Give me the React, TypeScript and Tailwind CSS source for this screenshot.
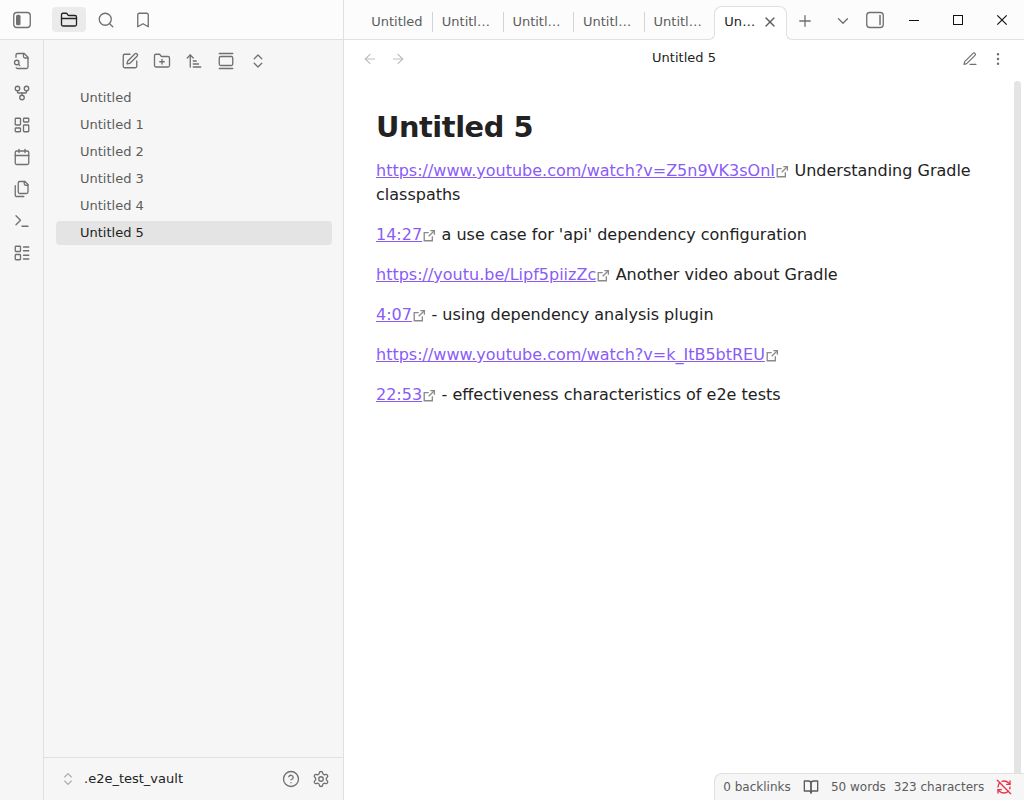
import type { ReactNode } from 'react';
import {
  ArrowLeft, ArrowRight, ArrowUpNarrowWide, Bookmark, Calendar, ChevronDown, ChevronsUpDown,
  CircleHelp, EllipsisVertical, FolderClosed, FolderPlus, GalleryVertical, GitFork,
  LayoutDashboard, LayoutList, Plus, RefreshCwOff, Search, Settings, SquarePen, Terminal, X,
} from 'lucide-react';

const notes = ['Untitled', 'Untitled 1', 'Untitled 2', 'Untitled 3', 'Untitled 4', 'Untitled 5'];

function SidebarToggle({ side }: { side: 'left' | 'right' }) {
  return (
    <svg width="18" height="18" viewBox="0 0 24 24" fill="none" stroke="currentColor" strokeWidth="1.75" className="shrink-0">
      <rect x="1" y="2" width="22" height="20" rx="4" />
      {side === 'left' ? (
        <rect x="4" y="5" width="6" height="14" rx="2" fill="currentColor" stroke="none" />
      ) : (
        <rect x="17.7" y="5" width="2" height="14" rx="1" fill="currentColor" stroke="none" />
      )}
    </svg>
  );
}

function LineIcon({ size = 18, width = 1.75, className, children }: { size?: number; width?: number; className?: string; children: ReactNode }) {
  return (
    <svg width={size} height={size} viewBox="0 0 24 24" fill="none" stroke="currentColor" strokeWidth={width} strokeLinecap="round" strokeLinejoin="round" className={className}>
      {children}
    </svg>
  );
}

function ExternalLink({ children }: { children: ReactNode }) {
  return (
    <a className="text-[#8a5cf5] underline">
      {children}
      <svg width="13" height="13" viewBox="0 0 32 32" fill="none" stroke="#8a8a8a" strokeWidth="3.3" className="ml-px mr-[0.4px] inline-block align-[-2px]">
        <path d="M14 9H3v20h20V18M18 4h10v10M28 4L14 18" />
      </svg>
    </a>
  );
}

const icon = { size: 18, strokeWidth: 1.75 };

export default function App() {
  return (
    <div className="flex h-[800px] w-[1024px] flex-col overflow-hidden bg-white text-[13px] text-[#222222] [font-family:'DejaVu_Sans',sans-serif]">
      <header className="flex h-10 shrink-0 border-b border-[#e0e0e0] bg-[#fcfcfc] text-[#707070]">
        <div className="flex w-[344px] shrink-0 items-center border-r border-[#e0e0e0] pl-[13px]">
          <SidebarToggle side="left" />
          <div className="ml-[21px] flex h-[25px] w-[34px] items-center justify-center rounded bg-[#ebebeb] text-[#222222]"><FolderClosed {...icon} /></div>
          <Search {...icon} className="ml-[11px]" />
          <Bookmark {...icon} className="ml-[19px]" />
        </div>
        <div className="flex min-w-0 flex-1 pl-[17px]">
          {notes.slice(0, 5).map((n, i) => (
            <div key={n} className="relative flex w-[70.6px] shrink-0 items-center pt-[4px] text-[#5c5c5c]">
              <span className="ml-[10.2px] w-[53px] truncate leading-5">{n}</span>
              {i < 4 && <span className="absolute -right-[1.4px] top-3 h-5 w-px bg-[#d4d4d4]" />}
            </div>
          ))}
          <div className="relative -mb-px mt-[6px] flex w-[73px] shrink-0 items-center rounded-t-lg border border-b-0 border-[#e0e0e0] bg-white pb-[4px] pl-[9.4px] text-[#222222]">
            <span className="absolute -left-[6px] bottom-0 h-[6px] w-[6px] overflow-hidden bg-white"><span className="block h-full w-full rounded-br-[6px] border-b border-r border-[#e0e0e0] bg-[#fcfcfc]" /></span>
            <span className="absolute -right-[6px] bottom-0 h-[6px] w-[6px] overflow-hidden bg-white"><span className="block h-full w-full rounded-bl-[6px] border-b border-l border-[#e0e0e0] bg-[#fcfcfc]" /></span>
            <span className="w-[34px] truncate leading-5">{notes[5]}</span>
            <X size={16} strokeWidth={2} className="ml-[3.6px] text-[#5c5c5c]" />
          </div>
          <div className="flex flex-1 items-center">
            <Plus {...icon} className="ml-[9px] mt-[3px]" />
            <ChevronDown {...icon} className="ml-[20px] mt-[2px]" />
            <span className="ml-[14px]"><SidebarToggle side="right" /></span>
            <svg width="12" height="12" viewBox="0 0 12 12" className="ml-[24px]"><rect x="1" y="6" width="10" height="1" fill="#111" /></svg>
            <svg width="12" height="12" viewBox="0 0 12 12" className="ml-[32px]" fill="none" stroke="#111"><rect x="1.5" y="1.5" width="9" height="9" /></svg>
            <svg width="12" height="12" viewBox="0 0 12 12" className="ml-[32px]" stroke="#111" strokeWidth="1.2"><path d="m1.3 1.3 9.4 9.4M10.7 1.3l-9.4 9.4" /></svg>
          </div>
        </div>
      </header>
      <div className="flex min-h-0 flex-1">
        <nav className="flex w-11 shrink-0 flex-col items-center gap-[14px] border-r border-[#e0e0e0] bg-[#f6f6f6] pt-[12px] text-[#707070]">
          <LineIcon>
            <path d="M14 2v4a2 2 0 0 0 2 2h4" />
            <path d="M4.268 21a2 2 0 0 0 1.727 1H18a2 2 0 0 0 2-2V7l-5-5H6a2 2 0 0 0-2 2v3" />
            <path d="m9 18-1.5-1.5" />
            <circle cx="5" cy="14" r="3" />
          </LineIcon>
          <GitFork {...icon} />
          <LayoutDashboard {...icon} />
          <Calendar {...icon} />
          <LineIcon>
            <path d="M20 7h-3a2 2 0 0 1-2-2V2" />
            <path d="M9 18a2 2 0 0 1-2-2V4a2 2 0 0 1 2-2h7l4 4v10a2 2 0 0 1-2 2Z" />
            <path d="M3 7.6v12.8A1.6 1.6 0 0 0 4.6 22h9.8" />
          </LineIcon>
          <Terminal {...icon} />
          <LayoutList {...icon} />
        </nav>
        <aside className="flex w-[300px] shrink-0 flex-col border-r border-[#e0e0e0] bg-[#f6f6f6]">
          <div className="flex h-[44px] shrink-0 items-center justify-center gap-[14px] pb-[2px] pl-px text-[#707070]">
            <SquarePen {...icon} />
            <FolderPlus {...icon} />
            <ArrowUpNarrowWide {...icon} />
            <GalleryVertical {...icon} />
            <ChevronsUpDown {...icon} />
          </div>
          <ul className="flex flex-1 flex-col gap-[3px] pl-3 pr-[11px] pt-[2px]">
            {notes.map((n) => (
              <li key={n} className={n === 'Untitled 5' ? 'h-6 rounded bg-[#e4e4e4] pl-6 leading-[23px]' : 'h-6 pl-6 leading-[23px] text-[#5c5c5c]'}>{n}</li>
            ))}
          </ul>
          <footer className="flex h-[43px] shrink-0 items-center border-t border-[#e0e0e0] pl-4 text-[#707070]">
            <ChevronsUpDown size={16} strokeWidth={1.75} className="text-[#ababab]" />
            <span className="ml-2 flex-1 text-[#222222]">.e2e_test_vault</span>
            <CircleHelp {...icon} />
            <Settings {...icon} className="ml-3 mr-[13px]" />
          </footer>
        </aside>
        <main className="relative flex min-w-0 flex-1 flex-col bg-white">
          <div className="flex h-[40px] shrink-0 items-center pb-[2px] pl-[18px] pr-[18px] text-[#707070]">
            <ArrowLeft size={16} strokeWidth={1.75} className="text-[#bdbdbd]" />
            <ArrowRight size={16} strokeWidth={1.75} className="ml-3 text-[#bdbdbd]" />
            <span className="mb-[3px] flex-1 text-center text-[#222222]">Untitled 5</span>
            <LineIcon size={16}>
              <path d="M12 20h9" />
              <path d="M16.5 3.5a2.12 2.12 0 0 1 3 3L7 19l-4 1 1-4Z" />
            </LineIcon>
            <EllipsisVertical size={16} strokeWidth={1.75} className="ml-3" />
          </div>
          <div className="flex min-h-0 flex-1">
            <article className="min-w-0 flex-1 pl-8 pr-8 pt-[30px] text-[16px] leading-6">
              <h1 className="mb-[14px] text-[28.8px] font-bold leading-[35px] tracking-[-0.432px]">Untitled 5</h1>
              <div className="flex flex-col gap-4">
                <p><ExternalLink>https://www.youtube.com/watch?v=Z5n9VK3sOnI</ExternalLink> Understanding Gradle classpaths</p>
                <p><ExternalLink>14:27</ExternalLink> a use case for 'api' dependency configuration</p>
                <p><ExternalLink>https://youtu.be/Lipf5piizZc</ExternalLink> Another video about Gradle</p>
                <p><ExternalLink>4:07</ExternalLink> - using dependency analysis plugin</p>
                <p><ExternalLink>https://www.youtube.com/watch?v=k_ItB5btREU</ExternalLink></p>
                <p><ExternalLink>22:53</ExternalLink> - effectiveness characteristics of e2e tests</p>
              </div>
            </article>
            <div className="mr-[3px] mt-px w-[7px] shrink-0 rounded-t bg-[#e4e4e4]" />
          </div>
          <div className="absolute bottom-0 right-0 flex h-[27px] w-[310px] items-center rounded-tl-lg border-l border-t border-[#e0e0e0] bg-[#f6f6f6] pl-[8.3px] text-[12px] text-[#5c5c5c]">
            <span>0 backlinks</span>
            <LineIcon size={16} width={2} className="ml-[12.7px]">
              <path d="M2 3h6a4 4 0 0 1 4 4v14a3 3 0 0 0-3-3H2z" />
              <path d="M22 3h-6a4 4 0 0 0-4 4v14a3 3 0 0 1 3-3h7z" />
            </LineIcon>
            <span className="ml-[11.5px]">50 words</span>
            <span className="ml-2">323 characters</span>
            <RefreshCwOff size={16} strokeWidth={2} className="ml-[11.5px] text-[#e93147]" />
          </div>
        </main>
      </div>
    </div>
  );
}
